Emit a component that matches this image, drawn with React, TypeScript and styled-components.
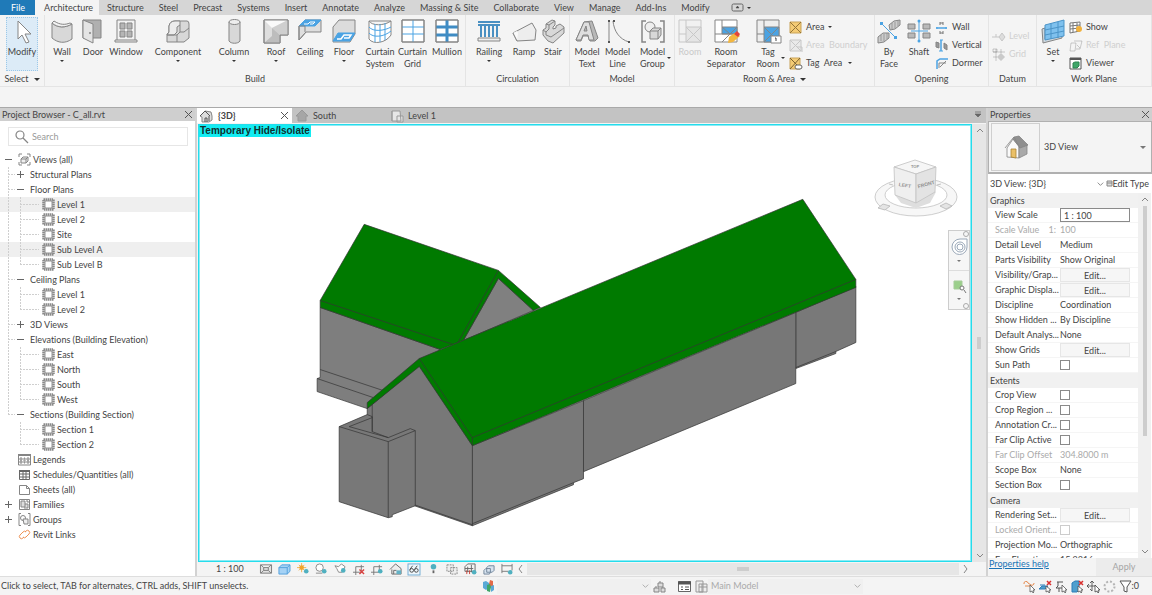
import React from "react";
import styled, { createGlobalStyle } from "styled-components";

const GlobalStyle = createGlobalStyle`
  *, *::before, *::after { box-sizing: border-box; }
  body { margin: 0; }
  body, button, input, select, table {
    font-family: Lato, "Noto Sans", sans-serif;
    font-size: 9px;
    line-height: 12px;
    color: #444;
    font-variant-ligatures: none;
  }
  button, input, select { margin: 0; padding: 0; border: 0; background: none; border-radius: 0; }
  ul { list-style: none; margin: 0; padding: 0; }
  svg { display: block; flex: none; overflow: visible; }
`;

/* ---------- icons ---------- */

const G = "#858585";
const L = "#d8d8d8";
const B = "#4ba3e3";

const star = (x: number, y: number) => <circle cx={x} cy={y} r="2.500" fill="#4fb0c0" stroke="none" />;

const bigIcons: Record<string, React.ReactNode> = {
  modify: <path d="M8 2v18l4-4 4 8 3-1-4-8h6z" fill="#fff" />,
  wall: (
    <>
      <path d="M2 4c6 5 13 5 20 1v15c-7 5-14 4-20-1z" fill={L} />
      <path d="M2 4l2-2c6 4 11 4 16 2l2 1c-7 4-14 4-20-1z" fill="#f2f2f2" />
    </>
  ),
  door: (
    <>
      <path d="M2 1h18v18H2z" fill="#b0b0b0" />
      <path d="M2 1l10 4v19L2 19z" fill="#e4e4e4" />
      <circle cx="9" cy="14" r="0.700" />
    </>
  ),
  window: (
    <>
      <path d="M3 1h18v21H3z" fill="#f2f2f2" />
      <path d="M6 4h5v6H6zM13 4h5v6h-5zM6 12h5v6H6zM13 12h5v6h-5z" fill="#b5b5b5" />
      <path d="M1 21h22v2H1z" fill="#eee" />
    </>
  ),
  component: (
    <>
      <path d="M3 14V7q1-5 6-5h12q2 0 2 3v14l-5 4H1v-8l2-2z" fill={L} />
      <path d="M3 13V7q1-5 6-5h5v4l-3 2v5l-3 3H1l2-3z" fill="#ececec" />
      <path d="M14 6v7l-3 3v7M14 13h4l5-4M11 16H1" />
    </>
  ),
  column: (
    <>
      <path d="M7 3v19c2 3 9 3 11 0V3z" fill={L} />
      <ellipse cx="12.500" cy="3" rx="5.500" ry="2.500" fill="#eee" />
    </>
  ),
  roof: (
    <>
      <path d="M0 1h24v15h-8v8H0z" fill="#dedede" />
      <path d="M0 1h24L8 9z" fill="#fafafa" stroke="none" />
      <path d="M8 9l16-8v15h-8z" fill="#cfcfcf" stroke="none" />
      <path d="M8 9v8l-8 7h16v-8z" fill="#bdbdbd" stroke="none" />
      <path d="M0 1h24v15h-8v8H0z" />
    </>
  ),
  ceiling: (
    <>
      <path d="M1 7l6-6h16v12H8l-7 8z" fill="#dedede" />
      <path d="M1 7l6-6h16l-6 6z" fill={B} stroke={B} />
      <path d="M6 5h4l2-2h5l-2 2h-3" stroke="#fff" />
      <path d="M1 7h6v6M1 7v14l7-8" />
    </>
  ),
  floor: (
    <>
      <path d="M1 8l6-7h16v14l-5 8H1z" fill="#dcdcdc" />
      <path d="M1 22l5-8h17l-5 8z" fill={B} stroke={B} />
      <path d="M5 20h4l3-4h7l-2 3h-5" stroke="#fff" strokeWidth="1.500" />
    </>
  ),
  curtainSystem: (
    <>
      <path d="M1 2c3 5 15 5 22 0v14c-5 8-18 10-22 4z" fill="#fff" />
      <path d="M1 8c4 5 15 4 22 0M1 14c4 5 15 4 22-2M7 5v18M12 5v18M17 4v17" stroke={B} />
      <path d="M1 2h22" />
    </>
  ),
  curtainGrid: (
    <>
      <path d="M1 1h22v22H1z" fill="#fff" />
      <path d="M1 8h22M1 15h22M12 1v22" stroke={B} />
      <path d="M1 1h22v22H1z" />
    </>
  ),
  mullion: (
    <>
      <path d="M1 1h22v22H1z" fill="#fff" />
      <path d="M1 8h22M1 16h22M12 1v22" stroke="#3f8cc4" strokeWidth="3" />
      <path d="M1 1h22v22H1z" />
    </>
  ),
  railing: (
    <>
      <path d="M1 3h22M1 6h22" stroke="#4a90c2" strokeWidth="2" />
      <path d="M4 6v12M8 6v12M12 6v12M16 6v12M20 6v12" stroke="#4a90c2" strokeWidth="2" />
      <path d="M1 19h22v3H1z" fill="#eee" />
    </>
  ),
  ramp: (
    <>
      <path d="M1 14L20 4l4 7-1 10-18 1z" fill="#ededed" />
      <path d="M5 22l-4-8 4-2 1 2" fill="#fafafa" stroke="none" />
      <path d="M1 14l4 8" />
    </>
  ),
  stair: (
    <>
      <path d="M2 11l3-2V5l6-4 3 1v4l-2 2v2l3-1V7l4-2 4 3v6L12 24l-5-2-5-6z" fill={L} />
      <path d="M5 5l3 1v4l-3 3v3l5 2 13-9M14 2L8 6M2 11l3 2" />
    </>
  ),
  modelText: (
    <>
      <path d="M1 21L9 3l8-1 6 17-3 3h-5l-2-5H8l-2 5H2z" fill="#b8b8b8" />
      <path d="M1 21L9 3h5l5 18h-5l-1-5H8l-2 5zM9 12h3l-1-5z" fill="#dedede" />
    </>
  ),
  modelLine: (
    <>
      <path d="M3 2v21M7 2C8 12 13 20 23 23" />
      <path d="M2 1h2v2H2zM2 22h2v2H2zM7 1h2v2H7zM22 22h2v2h-2z" fill="#555" stroke="none" />
    </>
  ),
  modelGroup: (
    <>
      <path d="M5 2H1v21h4M19 2h4v21h-4" strokeWidth="1.500" />
      <circle cx="9" cy="8" r="5" fill="#eee" />
      <path d="M9 12l3-3h8v7l-3 4H9z" fill={L} />
      <path d="M9 12h8v8M17 12l3-3" />
    </>
  ),
  room: (
    <>
      <path d="M1 1h22v22H1z" fill="#eee" />
      <path d="M8 8h15v15H8zM8 8l15 15M23 8L8 23M8 1v7M1 15h7" fill="#d0d0d0" />
    </>
  ),
  roomSeparator: (
    <>
      <path d="M1 1h22v22H1z" fill="#fff" />
      <path d="M8 8h15v7H8z" fill={B} />
      <path d="M8 1v7M1 15h22M8 8l8 7 7-7M8 23l8-8" />
      <path d="M14 24l1-6 7-5 4 4-7 6z" fill="#f3b63e" stroke="none" />
      <path d="M20 15l3-3 3 3-2 3z" fill="#e2453c" stroke="none" />
    </>
  ),
  tagRoom: (
    <>
      <path d="M1 1h22v22H1z" fill="#eee" />
      <path d="M8 8h15v15H8z" fill={B} />
      <path d="M8 8l15 15M23 8L8 23M8 1v7M1 15h7" />
      <path d="M15 17h10v7H15z" fill="#fff" />
      <path d="M20 19v3M19 19h1" stroke="#444" />
    </>
  ),
  byFace: (
    <>
      <path d="M12 6l5-4 6-1v5l-5 4-5 1zM1 18l5-4h6v5l-5 4-6 1z" fill="#ccc" />
      <path d="M15 4v6M18 3v6M21 2v5M4 16v6M7 15v7M10 14v6" strokeWidth="0.700" />
      <path d="M4 4l15 15" stroke={B} />
      <path d="M3 3h3v3H3zM17 17h3v3h-3z" fill={B} stroke="none" />
    </>
  ),
  shaft: (
    <>
      <path d="M1 5h7v5H1zM16 5h7v5h-7zM1 14h7v5H1zM16 14h7v5h-7z" fill="#b9b9b9" />
      <path d="M12 1v22M4 12h17" stroke={B} />
      <circle cx="12" cy="2" r="1.500" fill={B} stroke="none" />
      <circle cx="12" cy="22" r="1.500" fill={B} stroke="none" />
    </>
  ),
  set: (
    <>
      <path d="M1 10l3-1v11l17-4v3L2 24z" fill="#cfd8de" />
      <path d="M4 6l19-5v16L4 21z" fill="#7fc1ee" stroke="#4b94c8" />
      <path d="M10 4v16M17 3v16M4 11l19-4M4 16l19-4" stroke="#4b94c8" />
    </>
  ),
};

const smallIcons: Record<string, React.ReactNode> = {
  area: (
    <>
      <path d="M1 1h11v11H1z" fill="#f4cb74" stroke="#c9a358" />
      <path d="M1 1l11 11M12 1L1 12" stroke="#947438" />
    </>
  ),
  areaBoundary: <path d="M1 1h11v11H1zM1 1l11 11M12 1L1 12M8 8h5v5" fill="#ddd" />,
  tagArea: (
    <>
      <path d="M1 1h10v11H1z" fill="#f4cb74" stroke="#c9a358" />
      <path d="M1 1l8 8M11 1L1 12" stroke="#7c6230" />
      <rect x="6" y="8" width="7" height="4" rx="2" fill="#fff" stroke="#666" />
    </>
  ),
  openWall: (
    <>
      <path d="M5 1v3M8 1v3M5 2h3M5 10v3M8 10v3M5 12h3" stroke="#777" />
      <path d="M1 7h11" stroke={B} strokeWidth="1.500" />
      <path d="M2 6v2M11 6v2" stroke={B} />
    </>
  ),
  vertical: (
    <>
      <path d="M1 3l3 1v5L1 8zM9 4l3 2v5L9 9z" fill="#999" />
      <path d="M6 1v11" stroke={B} strokeWidth="1.500" />
      <path d="M4 12h4M5 1h3" stroke={B} />
    </>
  ),
  dormer: (
    <>
      <path d="M2 12V4l3-2h8" stroke={B} strokeWidth="1.500" />
      <path d="M4 11V6h7M5 10l6-6" />
    </>
  ),
  level: <path d="M0 7h7M4 4v3M10 3l3 4-3 4-3-4z" fill="#bbb" />,
  grid: <path d="M1 4h12M1 9h12M4 1v12M9 1v12M1 1h4v3H1zM7 7h4v4H7z" />,
  show: (
    <>
      <path d="M1 2l10-1v9L1 12zM1 5l10-1M1 8l10-1M4 2v9M8 2v9" stroke="#777" fill="#fff" />
      <circle cx="10" cy="8" r="3" fill="#f1b13c" stroke="none" />
    </>
  ),
  refPlane: <path d="M5 2h8l-2 8H7M2 4h5l-1 8H1zM8 6l3 3" />,
  viewer: (
    <>
      <path d="M1 1h11v11H1z" fill="#fff" stroke="#555" />
      <path d="M1 2h11" stroke="#555" strokeWidth="2" />
      <path d="M4 6l2-1h4v4l-2 2H4z" fill="#3fa668" stroke="#2d8450" />
    </>
  ),
  views: (
    <>
      <path d="M1 4V1h3M9 1h3v3M12 9v3H9M4 12H1V9" />
      <path d="M3 6l2-2h5v4L8 10H3zM3 6h5v4M8 6l2-2" fill="#eee" />
    </>
  ),
  sheetSet: (
    <>
      <path d="M1.500 1.500h10v10h-10z" stroke="#8a8a8a" strokeWidth="2.500" strokeDasharray="1.500 0.500" />
      <path d="M3 3h7v7H3z" fill="#fff" stroke="#777" strokeWidth="0.800" />
    </>
  ),
  legends: (
    <>
      <path d="M0.500 2h12v10H0.500z" fill="#fff" />
      <path d="M0 2h13" strokeWidth="2" />
      <path d="M2 5h2v2H2zM2 8h2v2H2zM6 5h1v5H6zM9 5h2v2H9zM9 8h2v2H9z" />
    </>
  ),
  schedules: (
    <>
      <path d="M1.500 2.500h10v9h-10zM1 6h11M1 9h11M5 3v8M8 3v8" fill="#fff" stroke="#666" />
      <path d="M1 3h11" strokeWidth="2" stroke="#666" />
    </>
  ),
  sheets: <path d="M1.500 2.500h7l3 3v6h-10zM8.500 2.500v3h3" fill="#fff" />,
  families: (
    <>
      <path d="M1.500 1.500h10v10h-10z" fill="#fff" />
      <path d="M3 3h4v6H3zM7 6h3v4H6M9 2v2h2" fill="#ddd" />
    </>
  ),
  groups: (
    <>
      <path d="M3 0.500H1v12h2M10 0.500h2v12h-2" />
      <circle cx="5" cy="5" r="2.500" />
      <path d="M5 6h5v5H6z" fill="#eee" />
    </>
  ),
  link: (
    <path
      d="M6 9l-1 1a2 2 0 0 1-3-3l3-3a2 2 0 0 1 3 0M7 4l1-1a2 2 0 0 1 3 3L8 9a2 2 0 0 1-3 0"
      stroke="#ee9255"
    />
  ),
  home3d: (
    <>
      <path d="M0 7l5-5 6 1 1 4v4l-3 2H2V8z" fill="#ddd" />
      <path d="M0 7l5-5 5 5M5 13V9h2v4M9 7v5" stroke="#555" />
    </>
  ),
  elevation: <path d="M1 7l6-6 6 6h-2v5H3V7z" fill="#a6a6a6" stroke="#999" />,
  plan: <path d="M2 2h8l1 10H2zM7 7h6v6H7zM2 2v10" fill="#e6e6e6" stroke="#999" />,
  detail: (
    <path d="M0.500 2h12v9H0.500zM1 2l3 3h5l3-3M1 11l3-3h5l3 3M4 5v3M9 5v3" stroke="#777" fill="#e2e2e2" />
  ),
  visualStyle: (
    <>
      <path d="M1 5l3-3h9v7l-3 3H1z" fill="#a5d2f5" stroke="#4f9edb" />
      <path d="M1 5h9v7M10 5l3-3" stroke="#4f9edb" />
    </>
  ),
  sun: (
    <>
      <path d="M5 0v10M0 5h10M2 2l6 6M8 2L2 8" stroke="#f2b14b" />
      <circle cx="5" cy="5" r="2.500" fill="#f2a42b" stroke="none" />
      {star(10, 9)}
    </>
  ),
  shadow: (
    <>
      <circle cx="5" cy="5" r="4" fill="#fff" />
      <path d="M1 11h7" />
      {star(10, 9)}
    </>
  ),
  render: (
    <>
      <path d="M1 3l4 1 3-3 4 3-3 6H5L3 6z" fill="#fff" />
      {star(10, 8)}
    </>
  ),
  crop: (
    <>
      <path d="M3 13V4h9M0 10h9V2" stroke="#777" />
      <path d="M7 7l5 5M12 7l-5 5" stroke="#d8403f" strokeWidth="1.500" />
    </>
  ),
  cropShow: (
    <>
      <path d="M3 13V4h9M0 10h9V2" stroke="#777" />
      {star(10, 9)}
    </>
  ),
  lock3d: (
    <>
      <path d="M0 7l6-6 6 5v6H2V7M4 12V8h3" fill="#eee" stroke="#666" />
      <path d="M7 8h5v4H7z" fill="#63b1c5" stroke="none" />
    </>
  ),
  glasses: (
    <>
      <rect x="0" y="1" width="13" height="12" fill="#eef6fb" stroke="#6ba8d2" />
      <circle cx="4" cy="8" r="2" stroke="#444" />
      <circle cx="9" cy="8" r="2" stroke="#444" />
      <path d="M2 7l3-4M7 7l3-4" stroke="#444" />
    </>
  ),
  bulb: (
    <>
      <circle cx="7" cy="4" r="3" fill="#4fb0c0" stroke="none" />
      <path d="M6 8h2v3H6z" fill="#666" stroke="none" />
    </>
  ),
  temp: <path d="M1 2h7v7H1zM5 5h7v7H5z" strokeDasharray="2 1" fill="#eee" />,
  analytical: (
    <>
      <path d="M1 4l3-3h8v8H1zM1 6h9M4 4v6M8 2v8" stroke="#666" />
      <path d="M3 8v4M6 8v4" stroke="#cc4338" />
      {star(11, 10)}
    </>
  ),
  displace: <path d="M4 5l2-2h6v5l-2 2H4zM1 8l2-2h5v4l-1 2H1z" fill="#d7e3ef" stroke="#6e8298" />,
  constraints: (
    <>
      <path d="M1 1v10M12 1v7M1 3h11M1 9h7" stroke="#777" />
      {star(10, 10)}
    </>
  ),
  workset: (
    <>
      <path d="M1 2l3-1 3 2v5l-3 2-3-2z" fill="#5aa9d6" stroke="none" />
      <path d="M8 0l3 1v5l-3 2-1-4z" fill="#e36a49" stroke="none" />
      <path d="M5 5l3-1 1 3-1 5-3-1z" fill="#3fa668" stroke="none" />
      <path d="M9 6l3-1v5l-3 2z" fill="#5aa9d6" stroke="none" />
    </>
  ),
  editable: <path d="M1 8h5v4H1zM8 8h4v4H8zM5 3h5v4H5zM7 1v2M3 6v2M10 7v1" fill="#ddd" />,
  options: (
    <>
      <path d="M0.500 1.500h12v10h-12z" fill="#fff" stroke="#666" />
      <path d="M0 3h13" stroke="#555" strokeWidth="3" />
      <path d="M3 7h2M7 7h4M3 9.500h2M7 9.500h4" stroke="#555" />
    </>
  ),
  optionSet: <path d="M1 1h7v11H1zM4 4h8v8H4zM4 7h8M7 4v8" fill="#eee" stroke="#999" />,
  selLinks: (
    <>
      <path d="M1 4a2 2 0 0 1 4-1l3 2a2 2 0 0 0 3-2M2 6h6" stroke="#e58a4e" />
      <path d="M7 5v7l2-1 1 2 1-1-1-2h2z" fill="#fff" stroke="#555" strokeWidth="0.800" />
    </>
  ),
  selUnderlay: (
    <>
      <path d="M0 9l3-3h6l-3 3zM1 5h5" fill="#4f9fce" stroke="#2d7db8" />
      <path d="M8 1l4 4M12 1L8 5" stroke="#d8302f" strokeWidth="1.500" />
      <path d="M7 6v6l2-1 1 2 1-1-1-2h2z" fill="#fff" stroke="#555" strokeWidth="0.800" />
    </>
  ),
  selPinned: (
    <>
      <path d="M2 2h6M3 2v4L1 8h6M4 8v4" stroke="#555" />
      <path d="M7 5v7l2-1 1 2 1-1-1-2h2z" fill="#fff" stroke="#555" strokeWidth="0.800" />
    </>
  ),
  selFace: (
    <>
      <path d="M1 3l3-2h4v9l-2 2H1z" fill="#4f9fce" stroke="#2d7db8" />
      <path d="M8 1l4 4M12 1L8 5" stroke="#d8302f" strokeWidth="1.500" />
      <path d="M7 6v6l2-1 1 2 1-1-1-2h2z" fill="#fff" stroke="#555" strokeWidth="0.800" />
    </>
  ),
  selDrag: (
    <>
      <path d="M0 6h9M5 1v10M3 3l2-2 2 2M3 9l2 2M2 4L0 6l2 2" stroke="#444" strokeWidth="0.800" />
      <path d="M8 5v7l2-1 1 2 1-1-1-2h2z" fill="#fff" stroke="#444" strokeWidth="0.800" />
    </>
  ),
  process: <circle cx="6.500" cy="6.500" r="5" stroke="#b5b5b5" strokeWidth="2" strokeDasharray="2 1.900" />,
  filter: <path d="M1 1h11L8 7v5l-3-1V7z" fill="#fff" stroke="#555" />,
  search: (
    <>
      <circle cx="5" cy="5" r="4" strokeWidth="1.200" />
      <path d="M8 8l5 5" strokeWidth="1.200" />
    </>
  ),
  close: <path d="M3 3l7 7M10 3l-7 7" stroke="#555" />,
  chevronDown: <path d="M4 5l3 3 3-3" />,
  chevronUp: <path d="M4 8l3-3 3 3" />,
  chevronLeft: <path d="M8 3L5 7l3 4" />,
  chevronRight: <path d="M5 3l3 4-3 4" />,
  tabMenu: <path d="M4 4h6M4 6h6l-3 3z" fill="#666" stroke="#666" strokeWidth="0.700" />,
  ribbonToggle: (
    <>
      <rect x="1" y="3" width="11" height="7" rx="1.500" stroke="#666" />
      <path d="M5 7l1.500-2L8 7z" fill="#444" stroke="#444" strokeWidth="0.500" />
    </>
  ),
};

const Icon = ({ name, size = 13, color = G }: { name: string; size?: number; color?: string }) => {
  const big = name in bigIcons;
  const box = big ? 24 : 13;
  return (
    <svg
      width={big ? 24 : size}
      height={big ? 24 : size}
      viewBox={`0 0 ${box} ${box}`}
      fill="none"
      stroke={color}
      strokeWidth="1"
      aria-hidden="true"
    >
      {big ? bigIcons[name] : smallIcons[name]}
    </svg>
  );
};

const Caret = styled.span<{ $size?: number; $soft?: boolean }>`
  width: 0;
  height: 0;
  flex: none;
  border: ${(p) => p.$size ?? 2}px solid transparent;
  border-top-color: ${(p) => (p.$soft ? "#777" : "#333")};
  border-bottom-width: 0;
`;

/* ---------- shell ---------- */

const Shell = styled.div`
  display: flex;
  flex-direction: column;
  height: 100vh;
  min-height: 400px;
  background: #f4f4f4;
  overflow: hidden;
`;

const TabBar = styled.nav`
  display: flex;
  flex: none;
  height: 15px;
  background: #d6d6d6;
`;

const tabPadding = { file: "1px 10px 0 11px", active: "1px 6px 0 9px", plain: "1px 7px 0 8px" };

const RibbonTab = styled.button<{ $kind?: "file" | "active" }>`
  height: 15px;
  padding: ${(p) => tabPadding[p.$kind ?? "plain"]};
  white-space: nowrap;
  color: ${(p) => (p.$kind === "file" ? "#fff" : "#444")};
  background: ${(p) => (p.$kind === "file" ? "#1f7ab8" : p.$kind === "active" ? "#f4f4f4" : "transparent")};
`;

const RibbonToggle = styled.button`
  display: flex;
  align-items: center;
  gap: 3px;
  margin-left: 14px;
`;

const Ribbon = styled.div`
  display: flex;
  flex: none;
  height: 72px;
  border-bottom: 1px solid #e4e4e4;
`;

const Panel = styled.section<{ $width?: number }>`
  display: flex;
  flex-direction: column;
  flex: 0 0 ${(p) => p.$width ?? 115}px;
  border-right: 1px solid #e4e4e4;
`;

const PanelTools = styled.div<{ $cols: string; $pad?: number }>`
  display: grid;
  grid-template-columns: ${(p) => p.$cols};
  flex: 1;
  padding: 2px 0 0 ${(p) => p.$pad ?? 0}px;
`;

const PanelTitle = styled.h2`
  display: flex;
  align-items: center;
  justify-content: center;
  gap: 5px;
  height: 14px;
  margin: 0;
  font-size: 9px;
  font-weight: 400;
`;

const ToolButton = styled.button<{ $active?: boolean }>`
  display: flex;
  flex-direction: column;
  align-items: center;
  height: 54px;
  padding-top: 2px;
  background: ${(p) => (p.$active ? "#dcebf7" : "transparent")};
  outline: ${(p) => (p.$active ? "1px dotted #9cc8e8" : "none")};
  outline-offset: -1px;
  &:disabled { color: #c9c9c9; }
  &:disabled svg { opacity: 0.4; }
`;

const ToolLabel = styled.span`
  display: block;
  margin: 3px 0 2px;
  white-space: pre;
`;

const ToolWithCaret = styled.span`
  display: flex;
  align-items: center;
  gap: 2px;
  margin-right: -6px;
`;

const SmallTools = styled.div<{ $top?: number }>`
  display: flex;
  flex-direction: column;
  gap: 4px;
  padding-top: ${(p) => p.$top ?? 3}px;
`;

const SmallTool = styled.button`
  display: flex;
  align-items: center;
  gap: 4px;
  height: 14px;
  text-align: left;
  white-space: pre;
  &:disabled { color: #cfcfcf; }
  &:disabled svg { opacity: 0.4; }
`;

const OptionsBar = styled.div`
  flex: none;
  height: 21px;
  border-bottom: 1px solid #a9a9a9;
`;

type Tool = { icon: string; label: string; caret?: boolean; side?: boolean; disabled?: boolean };

const Tools = ({ items }: { items: Tool[] }) => (
  <>
    {items.map((t) => (
      <ToolButton key={t.label} disabled={t.disabled}>
        <Icon name={t.icon} />
        {t.side ? (
          <ToolWithCaret>
            <ToolLabel>{t.label}</ToolLabel>
            <Caret />
          </ToolWithCaret>
        ) : (
          <ToolLabel>{t.label}</ToolLabel>
        )}
        {t.caret && <Caret />}
      </ToolButton>
    ))}
  </>
);

const Smalls = ({ items }: { items: Tool[] }) => (
  <>
    {items.map((t) => (
      <SmallTool key={t.label} disabled={t.disabled}>
        <Icon name={t.icon} />
        {t.label}
        {t.caret && <Caret />}
      </SmallTool>
    ))}
  </>
);

const tabs = [
  "Structure", "Steel", "Precast", "Systems", "Insert", "Annotate", "Analyze",
  "Massing & Site", "Collaborate", "View", "Manage", "Add-Ins", "Modify",
];

const RibbonArea = () => (
  <>
    <TabBar aria-label="Ribbon tabs">
      <RibbonTab $kind="file">File</RibbonTab>
      <RibbonTab $kind="active">Architecture</RibbonTab>
      {tabs.map((t) => (
        <RibbonTab key={t}>{t}</RibbonTab>
      ))}
      <RibbonToggle aria-label="Minimize ribbon">
        <Icon name="ribbonToggle" />
        <Caret />
      </RibbonToggle>
    </TabBar>
    <Ribbon>
      <Panel $width={45}>
        <PanelTools $cols="32px" $pad={6}>
          <ToolButton $active>
            <Icon name="modify" />
            <ToolLabel>Modify</ToolLabel>
          </ToolButton>
        </PanelTools>
        <PanelTitle>
          Select <Caret $size={3} />
        </PanelTitle>
      </Panel>
      <Panel $width={421}>
        <PanelTools $cols="32px 30px 36px 68px 44px 40px 28px 40px 32px 33px 36px" $pad={1}>
          <Tools
            items={[
              { icon: "wall", label: "Wall", caret: true },
              { icon: "door", label: "Door" },
              { icon: "window", label: "Window" },
              { icon: "component", label: "Component", caret: true },
              { icon: "column", label: "Column", caret: true },
              { icon: "roof", label: "Roof", caret: true },
              { icon: "ceiling", label: "Ceiling" },
              { icon: "floor", label: "Floor", caret: true },
              { icon: "curtainSystem", label: "Curtain\nSystem" },
              { icon: "curtainGrid", label: "Curtain\nGrid" },
              { icon: "mullion", label: "Mullion" },
            ]}
          />
        </PanelTools>
        <PanelTitle>Build</PanelTitle>
      </Panel>
      <Panel $width={104}>
        <PanelTools $cols="38px 32px 26px" $pad={4}>
          <Tools
            items={[
              { icon: "railing", label: "Railing", caret: true },
              { icon: "ramp", label: "Ramp" },
              { icon: "stair", label: "Stair" },
            ]}
          />
        </PanelTools>
        <PanelTitle>Circulation</PanelTitle>
      </Panel>
      <Panel $width={105}>
        <PanelTools $cols="30px 31px 39px" $pad={2}>
          <Tools
            items={[
              { icon: "modelText", label: "Model\nText" },
              { icon: "modelLine", label: "Model\nLine" },
              { icon: "modelGroup", label: "Model\nGroup", side: true },
            ]}
          />
        </PanelTools>
        <PanelTitle>Model</PanelTitle>
      </Panel>
      <Panel $width={200}>
        <PanelTools $cols="30px 42px 42px 80px">
          <Tools
            items={[
              { icon: "room", label: "Room", disabled: true },
              { icon: "roomSeparator", label: "Room\nSeparator" },
              { icon: "tagRoom", label: "Tag\nRoom", side: true },
            ]}
          />
          <SmallTools>
            <Smalls
              items={[
                { icon: "area", label: "Area", caret: true },
                { icon: "areaBoundary", label: "Area  Boundary", disabled: true },
                { icon: "tagArea", label: "Tag  Area ", caret: true },
              ]}
            />
          </SmallTools>
        </PanelTools>
        <PanelTitle>
          Room &amp; Area <Caret $size={3} />
        </PanelTitle>
      </Panel>
      <Panel $width={114}>
        <PanelTools $cols="28px 32px 50px">
          <Tools
            items={[
              { icon: "byFace", label: "By\nFace" },
              { icon: "shaft", label: "Shaft" },
            ]}
          />
          <SmallTools>
            <Smalls
              items={[
                { icon: "openWall", label: "Wall" },
                { icon: "vertical", label: "Vertical" },
                { icon: "dormer", label: "Dormer" },
              ]}
            />
          </SmallTools>
        </PanelTools>
        <PanelTitle>Opening</PanelTitle>
      </Panel>
      <Panel $width={48}>
        <PanelTools $cols="40px" $pad={3}>
          <SmallTools $top={12}>
            <Smalls
              items={[
                { icon: "level", label: "Level", disabled: true },
                { icon: "grid", label: "Grid", disabled: true },
              ]}
            />
          </SmallTools>
        </PanelTools>
        <PanelTitle>Datum</PanelTitle>
      </Panel>
      <Panel $width={115}>
        <PanelTools $cols="32px 80px">
          <Tools items={[{ icon: "set", label: "Set", caret: true }]} />
          <SmallTools>
            <Smalls
              items={[
                { icon: "show", label: "Show" },
                { icon: "refPlane", label: "Ref  Plane", disabled: true },
                { icon: "viewer", label: "Viewer" },
              ]}
            />
          </SmallTools>
        </PanelTools>
        <PanelTitle>Work Plane</PanelTitle>
      </Panel>
    </Ribbon>
    <OptionsBar />
  </>
);

/* ---------- project browser ---------- */

const Workspace = styled.main`
  display: grid;
  grid-template-columns: 195px minmax(0, 1fr) 164px;
  column-gap: 2px;
  flex: 1;
  min-height: 0;
  background: #d2d2d2;
`;

const Dock = styled.aside`
  display: flex;
  flex-direction: column;
  min-height: 0;
  background: #fff;
  overflow: hidden;
`;

const DockHeader = styled.header`
  display: flex;
  align-items: center;
  justify-content: space-between;
  flex: none;
  height: 13px;
  padding-left: 2px;
  background: #cfcfcf;
`;

const IconButton = styled.button`
  display: flex;
  align-items: center;
  justify-content: center;
  width: 13px;
  height: 13px;
`;

const SearchBox = styled.label`
  display: flex;
  align-items: center;
  flex: none;
  gap: 4px;
  height: 19px;
  margin: 6px 7px 6px 8px;
  padding-left: 6px;
  border: 1px solid #e6e6e6;
`;

const SearchInput = styled.input`
  flex: 1;
  min-width: 0;
  outline: none;
  &::placeholder { color: #999; opacity: 1; }
`;

const Tree = styled.ul`
  flex: 1;
  min-height: 0;
  overflow: hidden;
`;

const TreeRow = styled.li<{ $selected?: boolean }>`
  display: flex;
  align-items: center;
  height: 15px;
  white-space: nowrap;
  background: ${(p) => (p.$selected ? "#efefef" : "transparent")};
`;

const dots = (dir: string) => `repeating-linear-gradient(${dir}, #cfcfcf 0 2px, transparent 2px 3px)`;

const Guide = styled.span<{ $width: number; $line?: "full" | "half" | "none"; $arm?: boolean }>`
  flex: none;
  width: ${(p) => p.$width}px;
  height: 15px;
  background-image: ${dots("to bottom")}, ${dots("to right")};
  background-repeat: no-repeat;
  background-position: 0 0, 0 7px;
  background-size:
    ${(p) => (p.$line === "none" ? "0 0" : p.$line === "half" ? "1px 8px" : "1px 100%")},
    ${(p) => (p.$arm ? "100% 1px" : "0 0")};
`;

const Toggle = styled.button<{ $open?: boolean }>`
  flex: none;
  width: 7px;
  height: 7px;
  background:
    linear-gradient(#666, #666) center / 7px 1px no-repeat,
    linear-gradient(#666, #666) center / ${(p) => (p.$open ? "0 0" : "1px 7px")} no-repeat;
`;

const Gap = styled.span<{ $w: number }>`
  flex: none;
  width: ${(p) => p.$w}px;
`;

type Group = { name: string; open?: boolean; items?: string[]; selected?: string[] };

const groups: Group[] = [
  { name: "Structural Plans" },
  {
    name: "Floor Plans",
    open: true,
    items: ["Level 1", "Level 2", "Site", "Sub Level A", "Sub Level B"],
    selected: ["Level 1", "Sub Level A"],
  },
  { name: "Ceiling Plans", open: true, items: ["Level 1", "Level 2"] },
  { name: "3D Views" },
  { name: "Elevations (Building Elevation)", open: true, items: ["East", "North", "South", "West"] },
  { name: "Sections (Building Section)", open: true, items: ["Section 1", "Section 2"] },
];

const roots = [
  { name: "Legends", icon: "legends" },
  { name: "Schedules/Quantities (all)", icon: "schedules" },
  { name: "Sheets (all)", icon: "sheets" },
  { name: "Families", icon: "families", toggle: true },
  { name: "Groups", icon: "groups", toggle: true },
  { name: "Revit Links", icon: "link" },
];

const Browser = () => (
  <Dock>
    <DockHeader>
      Project Browser - C_all.rvt
      <IconButton aria-label="Close project browser">
        <Icon name="close" />
      </IconButton>
    </DockHeader>
    <SearchBox>
      <Icon name="search" />
      <SearchInput placeholder="Search" aria-label="Search" />
    </SearchBox>
    <Tree>
      <TreeRow>
        <Gap $w={5} />
        <Toggle $open aria-label="Collapse Views" />
        <Gap $w={6} />
        <Icon name="views" />
        <Gap $w={2} />
        Views (all)
      </TreeRow>
      {groups.map((g, gi) => {
        const last = gi === groups.length - 1;
        return (
          <React.Fragment key={g.name}>
            <TreeRow>
              <Gap $w={8} />
              <Guide $width={7} $line={last ? "half" : "full"} $arm />
              <Gap $w={2} />
              <Toggle $open={g.open} aria-label={`Toggle ${g.name}`} />
              <Gap $w={6} />
              {g.name}
            </TreeRow>
            {g.items?.map((item, i) => (
              <TreeRow key={item} $selected={g.selected?.includes(item)}>
                <Gap $w={8} />
                <Guide $width={12} $line={last ? "none" : "full"} />
                <Guide $width={19} $line={i === g.items!.length - 1 ? "half" : "full"} $arm />
                <Gap $w={3} />
                <Icon name="sheetSet" />
                <Gap $w={2} />
                {item}
              </TreeRow>
            ))}
          </React.Fragment>
        );
      })}
      {roots.map((r) => (
        <TreeRow key={r.name}>
          <Gap $w={5} />
          {r.toggle ? <Toggle aria-label={`Expand ${r.name}`} /> : <Gap $w={7} />}
          <Gap $w={6} />
          <Icon name={r.icon} />
          <Gap $w={2} />
          {r.name}
        </TreeRow>
      ))}
    </Tree>
  </Dock>
);

/* ---------- document area ---------- */

const Documents = styled.section`
  display: flex;
  flex-direction: column;
  min-width: 0;
  min-height: 0;
  background: #f4f4f4;
`;

const DocTabs = styled.div`
  display: flex;
  flex: none;
  height: 15px;
  background: #c3c3c3;
`;

const DocTab = styled.button<{ $active?: boolean }>`
  display: flex;
  align-items: center;
  gap: 5px;
  width: 95px;
  padding: 0 1px 0 3px;
  font-weight: ${(p) => (p.$active ? 700 : 400)};
  background: ${(p) => (p.$active ? "#fff" : "transparent")};
`;

const Fill = styled.span`
  flex: 1;
`;

const ViewRow = styled.div`
  display: flex;
  flex: 1;
  min-height: 0;
  padding: 1px 0 0 1px;
`;

const Canvas = styled.div`
  position: relative;
  display: flex;
  flex: 1;
  min-width: 0;
  border: 1px solid #25dcec;
  outline: 1px solid #8cecf5;
  outline-offset: -2px;
  background: #fff;
  overflow: hidden;
`;

const ModelSvg = styled.svg`
  flex: 1;
  width: 100%;
  height: 100%;
  min-width: 0;
`;

const IsolateLabel = styled.strong`
  position: absolute;
  top: 0;
  left: 0;
  padding: 0 1px;
  background: #12ecf2;
  color: #10302f;
  font: bold 10px/12px "Liberation Sans", Arial, sans-serif;
`;

const ViewCube = styled.div`
  position: absolute;
  top: 33px;
  right: 13px;
`;

const NavBar = styled.div`
  position: absolute;
  top: 105px;
  right: 1px;
  display: flex;
  flex-direction: column;
  width: 22px;
  height: 80px;
  border: 1px solid #cdcdcd;
  background: #f6f6f6;
`;

const NavButton = styled.button`
  display: flex;
  flex-direction: column;
  flex: 1;
  align-items: center;
  justify-content: center;
  gap: 5px;
  & + & { border-top: 1px solid #ddd; }
`;

const NavDot = styled.span<{ $bottom?: boolean }>`
  position: absolute;
  right: 0;
  ${(p) => (p.$bottom ? "bottom: 0;" : "top: 0;")}
  width: 6px;
  height: 6px;
  border: 1px solid #aaa;
  border-radius: 50%;
`;

const VScroll = styled.div`
  display: flex;
  flex-direction: column;
  align-items: center;
  justify-content: space-between;
  width: 14px;
  background: #e6e6e6;
`;

const Thumb = styled.span<{ $w: number; $h: number; $tone?: string }>`
  width: ${(p) => p.$w}px;
  height: ${(p) => p.$h}px;
  background: ${(p) => p.$tone ?? "#cdcdcd"};
`;

const ViewControls = styled.div`
  display: flex;
  align-items: center;
  flex: none;
  height: 14px;
  padding: 0 0 1px 19px;
`;

const ScaleButton = styled.button`
  width: 43px;
  text-align: left;
`;

const ControlIcons = styled.div`
  display: flex;
  justify-content: space-between;
  width: 255px;
`;

const HScroll = styled.div`
  display: flex;
  flex: 1;
  align-items: center;
  justify-content: center;
  height: 12px;
  background: #e6e6e6;
`;

const Model = () => (
  <ModelSvg viewBox="199 126 771 435" stroke="#333" strokeWidth="0.700" strokeLinejoin="round">
    <title>Building model</title>
    <path d="M320 308L440 350 384 403 367 409 317 392V379l3-1z" fill="#7e7e7e" />
    <path d="M320 370l63 21M317 379l56 19" fill="none" />
    <path d="M498 279L533 311 463 341z" fill="#808080" />
    <path d="M364 225L498 271 540 308 533 311 498 279 463 341 440 350 320 308V301z" fill="#007a00" />
    <path d="M320 301L453 345M498 271L457 344" fill="none" />
    <path d="M795 313L855 287V343L835 352V354L795 369z" fill="#797979" />
    <path d="M583 401L795 313V384L583 472z" fill="#777" />
    <path d="M472 446L583 401V479L573 483V485L472 526z" fill="#797979" />
    <path d="M419 366L472 446V526L414 506 367 430V409z" fill="#787878" />
    <path d="M472 524L573 483M414 505L472 525M795 368L835 352" fill="none" />
    <path d="M339 427L367 415 372 417V432L388 438 410 429 415 431V506L392 515V517L388 518 339 502z" fill="#787878" />
    <path d="M339 427L388 442 415 431M388 442V518M349 427L388 438M349 427L372 418M372 405V432" fill="none" />
    <path d="M802 200L855 280V288L472 446 419 367 367 409V403L419 359z" fill="#007a00" />
    <path d="M419 359L472 438V446M472 438L855 280" fill="none" />
  </ModelSvg>
);

const Cube = () => (
  <ViewCube>
    <svg width="84" height="60" viewBox="0 0 84 60" fill="none" stroke="#c2c2c2" strokeWidth="0.800" aria-label="View cube">
      <path
        d="M1 39a41 19 0 1 0 82 0a41 19 0 1 0-82 0zM11 37a31 13 0 1 0 62 0a31 13 0 1 0-62 0z"
        fill="#f7f7f7"
        fillRule="evenodd"
      />
      <path d="M21 37L42 29l20 5-6 11-14 5-15-5z" fill="#dedede" stroke="none" />
      <path d="M20 9L41 2 62 9 42 16z" fill="#f6f6f6" />
      <path d="M20 9L42 16V45L21 37z" fill="#efefef" />
      <path d="M62 9L42 16V45L61 34z" fill="#e3e3e3" />
      <g fill="#909090" stroke="none" fontFamily="Liberation Sans, sans-serif" fontWeight="700" textAnchor="middle">
        <text x="31" y="29" fontSize="5" transform="rotate(10 31 27)">LEFT</text>
        <text x="52" y="28" fontSize="5" transform="rotate(-16 52 26)">FRONT</text>
        <text x="41" y="10" fontSize="4">TOP</text>
      </g>
      <path d="M4 50l5-4 7 2-5 4zM66 48l6-3 6 3-6 3zM15 26l4 1M63 27l4-1" fill="#e4e4e4" stroke="#b5b5b5" />
    </svg>
  </ViewCube>
);

const controlIcons = [
  "detail", "visualStyle", "sun", "shadow", "render", "crop", "cropShow",
  "lock3d", "glasses", "bulb", "temp", "analytical", "displace", "constraints",
];

const DocumentArea = () => (
  <Documents>
    <DocTabs>
      <DocTab $active>
        <Icon name="home3d" />
        {"{3D}"}
        <Fill />
        <Icon name="close" />
      </DocTab>
      <DocTab>
        <Icon name="elevation" />
        South
      </DocTab>
      <DocTab>
        <Icon name="plan" />
        Level 1
      </DocTab>
      <Fill />
      <IconButton aria-label="Tab list">
        <Icon name="tabMenu" />
      </IconButton>
      <Gap $w={2} />
    </DocTabs>
    <ViewRow>
      <Canvas>
        <Model />
        <IsolateLabel>Temporary Hide/Isolate</IsolateLabel>
        <Cube />
        <NavBar>
          <NavButton aria-label="Steering wheel">
            <svg width="17" height="17" viewBox="0 0 17 17" fill="none" stroke="#9aa8b8">
              <path d="M1 9a8 8 0 0 1 8-8h7v8A7 7 0 0 1 1 9z" fill="#fff" />
              <circle cx="9" cy="9" r="5" />
              <circle cx="9" cy="9" r="3" />
            </svg>
            <Caret $soft />
          </NavButton>
          <NavButton aria-label="Zoom region">
            <svg width="13" height="13" viewBox="0 0 13 13" fill="none" stroke="#777">
              <path d="M1 1h8v8H1z" fill="#9bcf8b" stroke="#a5cd99" />
              <circle cx="9" cy="8" r="2" fill="#fff" />
              <path d="M11 10l2 3" />
            </svg>
            <Caret $soft />
          </NavButton>
          <NavDot />
          <NavDot $bottom />
        </NavBar>
      </Canvas>
      <VScroll>
        <Icon name="chevronUp" />
        <Thumb $w={4} $h={12} />
        <Icon name="chevronDown" />
      </VScroll>
    </ViewRow>
    <ViewControls>
      <ScaleButton>1 : 100</ScaleButton>
      <ControlIcons>
        {controlIcons.map((n) => (
          <IconButton key={n} aria-label={n}>
            <Icon name={n} size={12} />
          </IconButton>
        ))}
      </ControlIcons>
      <Icon name="chevronLeft" />
      <HScroll>
        <Thumb $w={12} $h={4} />
      </HScroll>
      <Icon name="chevronRight" />
      <Gap $w={14} />
    </ViewControls>
  </Documents>
);

/* ---------- properties ---------- */

const TypeSelector = styled.div`
  display: flex;
  align-items: center;
  flex: none;
  gap: 4px;
  height: 53px;
  padding: 0 5px 0 2px;
  border: 1px solid #b0b0b0;
  border-width: 1px 1px 2px;
  background: #f4f4f4;
`;

const TypeThumb = styled.span`
  display: flex;
  align-items: center;
  justify-content: center;
  flex: none;
  width: 49px;
  height: 48px;
  border: 1px solid #cfcfcf;
`;

const PlainSelect = styled.select`
  flex: 1;
  min-width: 0;
  appearance: none;
  outline: none;
  &:disabled { opacity: 1; color: #aaa; }
`;

const InstanceRow = styled.div`
  display: flex;
  align-items: center;
  flex: none;
  height: 19px;
  padding: 0 3px 0 2px;
`;

const EditType = styled.button`
  display: flex;
  align-items: center;
  gap: 1px;
  white-space: nowrap;
`;

const PropertyScroll = styled.div`
  display: flex;
  flex: 1;
  min-height: 0;
  overflow: hidden;
`;

const PropertyTable = styled.table`
  flex: 1;
  align-self: flex-start;
  width: 146px;
  table-layout: fixed;
  border-spacing: 0;
`;

const NameCol = styled.col`
  width: 71px;
`;

const GroupHead = styled.th`
  height: 15px;
  padding: 0 0 0 2px;
  text-align: left;
  font-weight: 400;
  background: #f1f1f1;
`;

const NameCell = styled.th<{ $dim?: boolean }>`
  height: 15px;
  padding: 0 0 0 7px;
  text-align: left;
  font-weight: 400;
  white-space: pre;
  border-bottom: 1px solid #f5f5f5;
  color: ${(p) => (p.$dim ? "#aaa" : "#444")};
`;

const ValueCell = styled.td<{ $dim?: boolean }>`
  height: 15px;
  padding: 0 0 0 1px;
  white-space: nowrap;
  border-bottom: 1px solid #f5f5f5;
  color: ${(p) => (p.$dim ? "#aaa" : "#444")};
`;

const ValueBox = styled.input`
  display: block;
  width: 70px;
  height: 14px;
  padding-left: 3px;
  border: 1px solid #8a8a8a;
  background: #fff;
`;

const EditButton = styled.button`
  display: block;
  width: 70px;
  height: 14px;
  padding-top: 1px;
  border: 1px solid #e6e6e6;
  background: #f6f6f6;
`;

const Check = styled.input`
  display: block;
  appearance: none;
  width: 10px;
  height: 10px;
  border: 1px solid #8a8a8a;
  background: #fff;
  &:disabled { border-color: #ccc; }
`;

const ScrollTrack = styled.div`
  display: flex;
  flex-direction: column;
  align-items: center;
  width: 13px;
  margin-right: 1px;
  background: #f0f0f0;
`;

const DockFooter = styled.footer`
  display: flex;
  align-items: center;
  justify-content: space-between;
  flex: none;
  height: 18px;
  background: #f4f4f4;
`;

const HelpLink = styled.a`
  align-self: flex-start;
  padding-left: 1px;
  color: #1a73b5;
`;

const ApplyButton = styled.button`
  width: 56px;
  height: 18px;
  background: #ececec;
  &:disabled { color: #a5a5a5; }
`;

type Prop = { name: string; kind: "text" | "edit" | "check" | "box"; value?: string; dim?: boolean };

const sections: { title: string; rows: Prop[] }[] = [
  {
    title: "Graphics",
    rows: [
      { name: "View Scale", kind: "box", value: "1 : 100" },
      { name: "Scale Value    1:", kind: "text", value: "100", dim: true },
      { name: "Detail Level", kind: "text", value: "Medium" },
      { name: "Parts Visibility", kind: "text", value: "Show Original" },
      { name: "Visibility/Grap...", kind: "edit" },
      { name: "Graphic Displa...", kind: "edit" },
      { name: "Discipline", kind: "text", value: "Coordination" },
      { name: "Show Hidden ...", kind: "text", value: "By Discipline" },
      { name: "Default Analys...", kind: "text", value: "None" },
      { name: "Show Grids", kind: "edit" },
      { name: "Sun Path", kind: "check" },
    ],
  },
  {
    title: "Extents",
    rows: [
      { name: "Crop View", kind: "check" },
      { name: "Crop Region ...", kind: "check" },
      { name: "Annotation Cr...", kind: "check" },
      { name: "Far Clip Active", kind: "check" },
      { name: "Far Clip Offset", kind: "text", value: "304.8000 m", dim: true },
      { name: "Scope Box", kind: "text", value: "None" },
      { name: "Section Box", kind: "check" },
    ],
  },
  {
    title: "Camera",
    rows: [
      { name: "Rendering Set...", kind: "edit" },
      { name: "Locked Orient...", kind: "check", dim: true },
      { name: "Projection Mo...", kind: "text", value: "Orthographic" },
      { name: "Eye Elevation", kind: "text", value: "15.2316" },
    ],
  },
];

const Value = ({ row }: { row: Prop }) => {
  if (row.kind === "edit") return <EditButton aria-label={`${row.name} Edit`}>Edit...</EditButton>;
  if (row.kind === "check") return <Check type="checkbox" aria-label={row.name} disabled={row.dim} />;
  if (row.kind === "box") return <ValueBox defaultValue={row.value} aria-label={row.name} />;
  return <>{row.value}</>;
};

const Properties = () => (
  <Dock>
    <DockHeader>
      Properties
      <IconButton aria-label="Close properties">
        <Icon name="close" />
      </IconButton>
    </DockHeader>
    <TypeSelector>
      <TypeThumb>
        <svg width="24" height="24" viewBox="0 0 24 24" stroke="#858585" strokeWidth="0.800" fill="none">
          <path d="M3 13v9l12 1V11L9 4z" fill="#fafafa" />
          <path d="M15 12l8-3v10l-8 4z" fill="#a9a9a9" />
          <path d="M10 2l5-1 9 9-8 3-7-9z" fill="#8f8f8f" />
          <path d="M1 13L9 3l1-1 6 11" />
          <path d="M7 14h5v9l-5-1z" fill="#eac068" stroke="#a98435" />
        </svg>
      </TypeThumb>
      <PlainSelect aria-label="Type">
        <option>3D View</option>
      </PlainSelect>
      <Caret $size={3} $soft />
    </TypeSelector>
    <InstanceRow>
      <PlainSelect aria-label="Instance">
        <option>3D View: {"{3D}"}</option>
      </PlainSelect>
      <Icon name="chevronDown" size={12} />
      <EditType>
        <svg width="6" height="7" viewBox="0 0 6 7" stroke="#888" fill="#ddd">
          <path d="M1 1h5v5H1zM1 3h5" />
        </svg>
        Edit Type
      </EditType>
    </InstanceRow>
    <PropertyScroll>
      <PropertyTable>
        <colgroup>
          <NameCol />
          <col />
        </colgroup>
        {sections.map((s) => (
          <tbody key={s.title}>
            <tr>
              <GroupHead colSpan={2} scope="rowgroup">{s.title}</GroupHead>
            </tr>
            {s.rows.map((r) => (
              <tr key={r.name}>
                <NameCell scope="row" $dim={r.dim}>{r.name}</NameCell>
                <ValueCell $dim={r.dim}>
                  <Value row={r} />
                </ValueCell>
              </tr>
            ))}
          </tbody>
        ))}
      </PropertyTable>
      <ScrollTrack>
        <Icon name="chevronUp" />
        <Thumb $w={4} $h={230} />
        <Fill />
        <Icon name="chevronDown" />
      </ScrollTrack>
    </PropertyScroll>
    <DockFooter>
      <HelpLink href="#help">Properties help</HelpLink>
      <ApplyButton disabled>Apply</ApplyButton>
    </DockFooter>
  </Dock>
);

/* ---------- status bar ---------- */

const StatusBar = styled.footer`
  display: flex;
  align-items: center;
  flex: none;
  height: 19px;
  padding-right: 13px;
  border-top: 1px solid #dedede;
  background: #f4f4f4;
`;

const StatusText = styled.span`
  flex: 0 0 482px;
  padding-left: 1px;
`;

const StatusSelect = styled.label<{ $width: number }>`
  display: flex;
  align-items: center;
  width: ${(p) => p.$width}px;
  height: 15px;
  padding-left: 3px;
  background: #f0f0f0;
`;

const SelectionTools = styled.div`
  display: flex;
  align-items: center;
  gap: 3px;
`;

const selectionIcons = ["selLinks", "selUnderlay", "selPinned", "selFace", "selDrag", "process", "filter"];

const Status = () => (
  <StatusBar>
    <StatusText>Click to select, TAB for alternates, CTRL adds, SHIFT unselects.</StatusText>
    <Icon name="workset" />
    <Gap $w={2} />
    <StatusSelect $width={154}>
      <PlainSelect aria-label="Active workset" disabled />
      <Icon name="chevronDown" size={12} color="#aaa" />
    </StatusSelect>
    <Gap $w={2} />
    <Icon name="editable" />
    <Gap $w={12} />
    <Icon name="options" />
    <Gap $w={4} />
    <Icon name="optionSet" />
    <StatusSelect $width={155}>
      <PlainSelect aria-label="Design option" disabled>
        <option>Main Model</option>
      </PlainSelect>
      <Icon name="chevronDown" size={12} color="#aaa" />
    </StatusSelect>
    <Fill />
    <SelectionTools>
      {selectionIcons.map((n) => (
        <IconButton key={n} aria-label={n}>
          <Icon name={n} />
        </IconButton>
      ))}
    </SelectionTools>
    :0
  </StatusBar>
);

export default function App() {
  return (
    <Shell>
      <GlobalStyle />
      <RibbonArea />
      <Workspace>
        <Browser />
        <DocumentArea />
        <Properties />
      </Workspace>
      <Status />
    </Shell>
  );
}
